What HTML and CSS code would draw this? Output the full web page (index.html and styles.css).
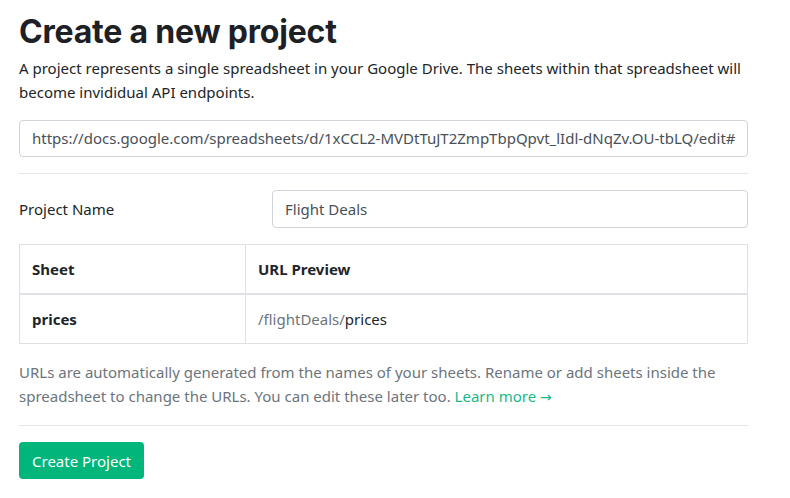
FILE: index.html
```html
<!DOCTYPE html>
<html>
<head>
<meta charset="utf-8">
<link rel="stylesheet" href="styles.css">
</head>
<body>
<main class="page">
  <h1 class="title">Create a new project</h1>
  <p class="lead">A project represents a single spreadsheet in your Google Drive. The sheets within that spreadsheet will become invididual API endpoints.</p>
  <div class="input url-input">https://docs.google.com/spreadsheets/d/1xCCL2-MVDtTuJT2ZmpTbpQpvt_lIdl-dNqZv.OU-tbLQ/edit#</div>
  <hr class="rule">
  <div class="field-row">
    <label class="field-label">Project Name</label>
    <div class="input name-input">Flight Deals</div>
  </div>
  <table class="sheets">
    <thead>
      <tr><th class="col-sheet">Sheet</th><th>URL Preview</th></tr>
    </thead>
    <tbody>
      <tr><td class="sheet-name">prices</td><td class="preview"><span class="muted">/flightDeals/</span>prices</td></tr>
    </tbody>
  </table>
  <p class="help">URLs are automatically generated from the names of your sheets. Rename or add sheets inside the spreadsheet to change the URLs. You can edit these later too. <a class="link" href="#">Learn more <span class="arrow">→</span></a></p>
  <hr class="rule rule-bottom">
  <button class="btn">Create Project</button>
</main>
</body>
</html>
```
FILE: styles.css
```css
html, body { margin: 0; padding: 0; background: #fff; }
body {
  font-family: "Noto Sans", "Open Sans", sans-serif;
  font-size: 15px;
  color: #212529;
}
.page {
  width: 729px;
  padding: 0 19px;
}
.title {
  font-family: Inter, "Liberation Sans", sans-serif;
  font-weight: 700;
  font-size: 32px;
  line-height: 38px;
  margin: 13px 0 5px;
  letter-spacing: -0.2px;
  color: #1d2024;
}
.lead {
  margin: 0 0 16px;
  line-height: 24px;
}
.input {
  border: 1px solid #ced4da;
  border-radius: 4px;
  padding: 0 12px;
  height: 35px;
  line-height: 35px;
  color: #495057;
  white-space: nowrap;
  overflow: hidden;
}
.rule {
  border: 0;
  border-top: 1px solid #e5e5e5;
  margin: 16px 0;
}
.field-row {
  display: flex;
  align-items: center;
}
.field-label { width: 253px; }
.name-input { flex: 1; height: 36px; line-height: 36px; }
.sheets {
  width: 100%;
  border-collapse: collapse;
  margin-top: 16px;
}
.sheets th, .sheets td {
  border: 1px solid #dee2e6;
  text-align: left;
  padding: 0 12px;
  height: 48px;
}
.sheets thead th { border-bottom-width: 2px; font-weight: 700; }
.col-sheet { width: 201px; }
.sheet-name { font-weight: 700; }
.muted { color: #6c757d; }
.help {
  color: #6c757d;
  line-height: 24px;
  margin: 16px 0 0;
}
.link { color: #17b98a; text-decoration: none; }
.arrow { font-family: "DejaVu Sans", sans-serif; font-size: 14px; }
.btn {
  font-family: inherit;
  font-size: 15px;
  color: #fff;
  background: #00b67a;
  border: 0;
  border-radius: 4px;
  height: 37px;
  padding: 0 13px;
}
```
